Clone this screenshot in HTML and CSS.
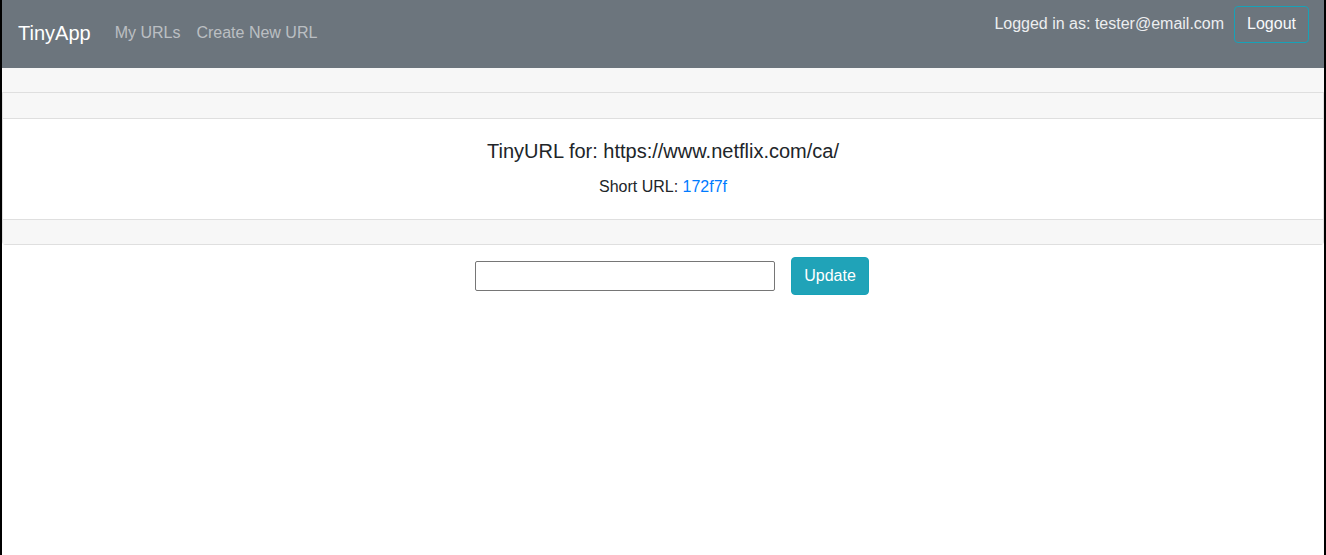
FILE: index.html
```html
<!DOCTYPE html>
<html lang="en">
<head>
<meta charset="utf-8">
<title>TinyApp</title>
<link rel="stylesheet" href="styles.css">
</head>
<body>
<nav class="navbar">
  <div class="nav-left">
    <a class="brand" href="#">TinyApp</a>
    <a class="nav-link" href="#">My URLs</a>
    <a class="nav-link" href="#">Create New URL</a>
  </div>
  <div class="nav-right">
    <span class="user">Logged in as: tester@email.com</span>
    <button class="btn-logout" type="button">Logout</button>
  </div>
</nav>
<div class="band"></div>
<div class="card">
  <div class="card-header"></div>
  <div class="card-body">
    <h5 class="card-title">TinyURL for: https://www.netflix.com/ca/</h5>
    <p class="card-text">Short URL: <a href="#">172f7f</a></p>
  </div>
  <div class="card-footer"></div>
</div>
<form class="edit-form">
  <input class="url-input" type="text" name="longURL">
  <button class="btn-update" type="button">Update</button>
</form>
</body>
</html>
```
FILE: styles.css
```css
* { box-sizing: border-box; }
html, body { height: 100%; }
body {
  margin: 0;
  border-left: 2px solid #000;
  border-right: 2px solid #000;
  font-family: "Liberation Sans", Arial, sans-serif;
  font-size: 16px;
  color: #212529;
  background: #fff;
}
a { text-decoration: none; }
.navbar {
  display: flex;
  align-items: flex-start;
  height: 68px;
  margin-right: -1px;
  padding: 0 16px;
  background: #6c757d;
}
.nav-left {
  display: flex;
  align-items: center;
  height: 66px;
}
.brand {
  color: #fff;
  font-size: 20px;
  line-height: 30px;
  margin-right: 16px;
}
.nav-link {
  color: rgba(255,255,255,.55);
  padding: 8px;
  line-height: 24px;
}
.nav-right {
  margin-left: auto;
  display: flex;
  align-items: center;
  margin-top: 6px;
  height: 37px;
}
.user {
  color: #eceef0;
  line-height: 24px;
  margin-right: 10px;
  margin-top: -1px;
}
.btn-logout {
  font: inherit;
  color: #f8f9fa;
  background: transparent;
  border: 1px solid #17a2b8;
  border-radius: 4px;
  padding: 5px 12px 6px;
  line-height: 24px;
  height: 37px;
}
.band {
  height: 25px;
  background: #f7f7f7;
  border-bottom: 1px solid #dfdfdf;
}
.card {
  border: 1px solid #dfdfdf;
  border-top: none;
  border-radius: 0 0 4px 4px;
  text-align: center;
}
.card-header {
  height: 26px;
  background: #f7f7f7;
  border-bottom: 1px solid #dfdfdf;
}
.card-body {
  padding: 20px;
}
.card-title {
  margin: 0 0 12px;
  font-size: 20px;
  font-weight: 400;
  line-height: 24px;
}
.card-text {
  margin: 0;
  line-height: 24px;
}
.card-text a { color: #007bff; }
.card-footer {
  height: 25px;
  background: #f7f7f7;
  border-top: 1px solid #dfdfdf;
}
.edit-form {
  display: flex;
  justify-content: center;
  align-items: center;
  gap: 16px;
  margin: 0;
  padding: 12px 0 0 18px;
}
.url-input {
  width: 300px;
  height: 30px;
  border: 1px solid #767676;
  border-radius: 2px;
  font: inherit;
}
.btn-update {
  font: inherit;
  color: #fff;
  background: #20a3b8;
  border: 1px solid #17a2b8;
  border-radius: 4px;
  padding: 6px 12px;
  line-height: 24px;
  height: 38px;
}
```
